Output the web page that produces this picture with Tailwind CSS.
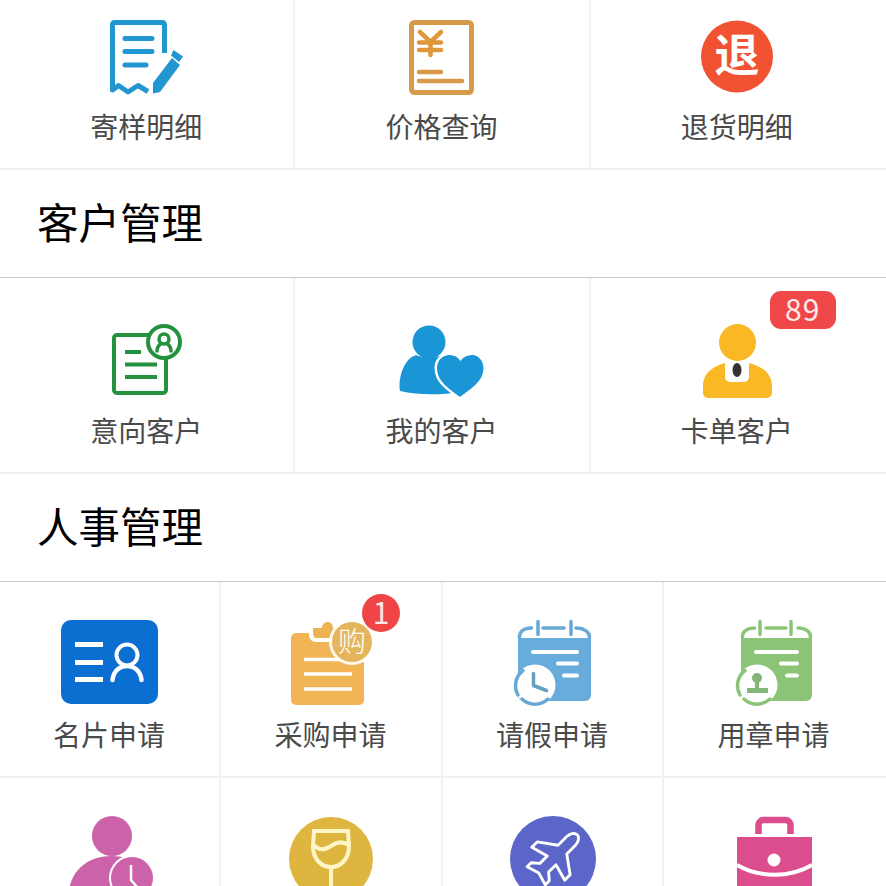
<!DOCTYPE html>
<html lang="zh-CN">
  <head>
    <meta charset="UTF-8" />
    <meta name="viewport" content="width=device-width, initial-scale=1.0" />
    <script src="https://cdn.jsdelivr.net/npm/@tailwindcss/browser@4"></script>
  </head>
  <body class="bg-white">
    <div class="h-[886px] w-[886px] overflow-hidden font-['Noto_Sans_CJK_SC',sans-serif] text-[#4a4a4a]">
      <div class="-mt-[26px]">
        <!-- orders -->
        <div class="grid grid-cols-3 border-b-2 border-[#f2f2f2]">
          <div class="flex h-[194px] flex-col items-center border-r-2 border-[#f2f2f2] pt-[46px]">
            <svg class="block h-[76px] w-[110px] overflow-visible" viewBox="92 20 110 76" fill="none">
              <path d="M164.500 53V24.500a2 2 0 0 0-2-2H114.500a2 2 0 0 0-2 2V90l6-4.500 9.500 6.500 10-6.500 10 6" stroke="#2196d0" stroke-width="5" stroke-linejoin="round" />
              <path d="M125 38.500h27M125 51.500h27M125 65h21" stroke="#2196d0" stroke-width="5" stroke-linecap="round" />
              <path d="M153 93.500V83l19-25 8 7-20 27z" fill="#2196d0" />
              <path d="M173.500 50l9.500 6.500-4 5.500-8-6.500z" fill="#2196d0" />
            </svg>
            <span class="mt-[10px] -ml-[1px] text-[28px] leading-[40px]">寄样明细</span>
          </div>
          <div class="flex h-[194px] flex-col items-center border-r-2 border-[#f2f2f2] pt-[46px]">
            <svg class="block h-[76px] w-[110px] overflow-visible" viewBox="387 20 110 76" fill="none">
              <rect x="411.500" y="22.500" width="60" height="70" rx="3" stroke="#d69a48" stroke-width="5" />
              <path d="M420 32l10.500 10L441 32M419 42.500h22M419 50h22M430.500 42v13" stroke="#e0963a" stroke-width="4.500" stroke-linecap="round" />
              <path d="M419 72h22M419 81h43" stroke="#d69a48" stroke-width="4.500" stroke-linecap="round" />
            </svg>
            <span class="mt-[10px] -ml-[1px] text-[28px] leading-[40px]">价格查询</span>
          </div>
          <div class="flex h-[194px] flex-col items-center border-r-2 border-transparent pt-[46px]">
            <svg class="block h-[76px] w-[110px] overflow-visible" viewBox="682 20 110 76">
              <circle cx="737" cy="56.500" r="36" fill="#f15232" />
              <text x="737" y="72" text-anchor="middle" font-size="45" font-weight="700" fill="#ffffff">退</text>
            </svg>
            <span class="mt-[10px] -ml-[1px] text-[28px] leading-[40px]">退货明细</span>
          </div>
        </div>

        <div class="flex h-[108px] items-center border-b border-[#cccccc] pb-[3px] pl-[37px] text-[41.500px] leading-none text-black">客户管理</div>

        <div class="grid grid-cols-3 border-b-2 border-[#f2f2f2]">
          <div class="flex h-[194px] flex-col items-center border-r-2 border-[#f2f2f2] pt-[46px]">
            <svg class="block h-[76px] w-[110px] overflow-visible" viewBox="92 324 110 76" fill="none">
              <rect x="114" y="335" width="52" height="58" rx="3" stroke="#23913d" stroke-width="4" />
              <path d="M125 352h16M125 364.500h32M125 377h32" stroke="#23913d" stroke-width="4" />
              <circle cx="164" cy="342" r="16" fill="#ffffff" stroke="#23913d" stroke-width="4" />
              <circle cx="164" cy="339" r="5" stroke="#23913d" stroke-width="3.500" />
              <path d="M157 351c0-4 2-6 4-7.500M171 351c0-4-2-6-4-7.500" stroke="#23913d" stroke-width="3.500" stroke-linecap="round" />
            </svg>
            <span class="mt-[10px] -ml-[1px] text-[28px] leading-[40px]">意向客户</span>
          </div>
          <div class="flex h-[194px] flex-col items-center border-r-2 border-[#f2f2f2] pt-[46px]">
            <svg class="block h-[76px] w-[110px] overflow-visible" viewBox="387 324 110 76">
              <circle cx="429" cy="342" r="16.500" fill="#1a96d6" />
              <path d="M416 355c5 3 21 3 26 0 10 3 12 15 12 38-16 2-38 2-54-2-2-14 4-32 16-36z" fill="#1a96d6" />
              <path d="M460 397c-12-9-23-16-23-29 0-8 6-13 12.500-13 4.500 0 8.500 2 11 6 2.500-4 6.500-6 11.500-6 6.500 0 11.500 6 11.500 13 0 13-11.500 20-23.500 29z" fill="#1a96d6" stroke="#ffffff" stroke-width="5" paint-order="stroke" />
            </svg>
            <span class="mt-[10px] -ml-[1px] text-[28px] leading-[40px]">我的客户</span>
          </div>
          <div class="relative flex h-[194px] flex-col items-center border-r-2 border-transparent pt-[46px]">
            <svg class="block h-[76px] w-[110px] overflow-visible" viewBox="682 324 110 76">
              <circle cx="737.500" cy="342.500" r="18.500" fill="#fbb825" />
              <path d="M725 363v14a5 5 0 0 0 5 5h14a5 5 0 0 0 5-5v-14c14 4 23 10 23 24v6a5 5 0 0 1-5 5h-59a5 5 0 0 1-5-5v-6c0-14 9-20 22-24z" fill="#fbb825" />
              <ellipse cx="737" cy="370" rx="4.500" ry="7" fill="#333333" />
            </svg>
            <span class="mt-[10px] -ml-[1px] text-[28px] leading-[40px]">卡单客户</span>
            <span class="absolute left-[179px] top-[13px] flex h-[38px] w-[66px] items-center justify-center rounded-[11px] bg-[#f04848] pb-[5px] text-[30px] leading-none tracking-[1px] text-[#ffe9e9]">89</span>
          </div>
        </div>

        <div class="flex h-[108px] items-center border-b border-[#cccccc] pb-[3px] pl-[37px] text-[41.500px] leading-none text-black">人事管理</div>

        <div class="grid grid-cols-[221px_222px_221px_222px] border-b-2 border-[#f2f2f2]">
          <div class="flex h-[194px] flex-col items-center border-r-2 border-[#f2f2f2] pt-[38px]">
            <svg class="block h-[84px] w-[110px] overflow-visible" viewBox="55 620 110 84" fill="none">
              <rect x="61" y="620" width="97" height="84" rx="10" fill="#0b6fd2" />
              <path d="M75 644.500h28M75 662.500h28M75 679.500h28" stroke="#ffffff" stroke-width="5" />
              <circle cx="127" cy="655" r="10.500" stroke="#ffffff" stroke-width="4" />
              <path d="M112.500 680c1-9 7-14 14.500-14s13.500 5 14.500 14" stroke="#ffffff" stroke-width="4.500" stroke-linecap="round" />
            </svg>
            <span class="mt-[10px] -ml-[1px] text-[28px] leading-[40px]">名片申请</span>
          </div>
          <div class="relative flex h-[194px] flex-col items-center border-r-2 border-[#f2f2f2] pt-[38px]">
            <svg class="block h-[84px] w-[110px] overflow-visible" viewBox="276 620 110 84" fill="none">
              <path d="M296 633h13c0 6 2 9 8 9h30v20h17v38a5 5 0 0 1-5 5h-63a5 5 0 0 1-5-5v-62a5 5 0 0 1 5-5z" fill="#f2b555" />
              <path d="M313 628h9c0-4 3-6 6-6s5 3 5 6h5v10h-21c-3 0-4-2-4-6z" fill="#ecb254" />
              <path d="M304 659.500h48M304 674h48M304 689h48" stroke="#ffffff" stroke-width="3.500" />
              <circle cx="352" cy="642" r="23" fill="#ffffff" fill-opacity="0.9" />
              <circle cx="352" cy="642" r="20" fill="#e5b55c" />
              <text x="352" y="652" text-anchor="middle" font-size="28" font-weight="300" fill="#ffffff">购</text>
            </svg>
            <span class="mt-[10px] -ml-[1px] text-[28px] leading-[40px]">采购申请</span>
            <span class="absolute left-[141px] top-[12px] flex size-[38px] items-center justify-center rounded-full bg-[#f04545] pb-[5px] text-[30px] leading-none text-[#ffe9e9]">1</span>
          </div>
          <div class="flex h-[194px] flex-col items-center border-r-2 border-[#f2f2f2] pt-[38px]">
            <svg class="block h-[84px] w-[110px] overflow-visible" viewBox="498 620 110 84" fill="none">
              <path d="M518 638h73v57a6 6 0 0 1-6 6h-61a6 6 0 0 1-6-6z" fill="#68acdc" />
              <path d="M519.500 637c0-5 4-9 12-9M543 628h21M576 628c8 0 13.500 4 13.500 9M538 621.500v13M571 621.500v13" stroke="#68a8d4" stroke-width="3.500" stroke-linecap="round" />
              <path d="M533 652h44M558 663.500h19M564 675.500h13" stroke="#ffffff" stroke-width="4" stroke-linecap="round" />
              <circle cx="535" cy="685" r="20.500" fill="#ffffff" />
              <path d="M523 670.500A19 19 0 0 0 518 695M522 699A19 19 0 0 0 548 699" stroke="#68a8d4" stroke-width="3.500" stroke-linecap="round" />
              <path d="M533.500 673.500v12l13 5" stroke="#68a0c4" stroke-width="3.500" stroke-linecap="round" stroke-linejoin="round" />
            </svg>
            <span class="mt-[10px] -ml-[1px] text-[28px] leading-[40px]">请假申请</span>
          </div>
          <div class="flex h-[194px] flex-col items-center border-r-2 border-transparent pt-[38px]">
            <svg class="block h-[84px] w-[110px] overflow-visible" viewBox="719 620 110 84" fill="none">
              <path d="M741 638h71v57a6 6 0 0 1-6 6h-59a6 6 0 0 1-6-6z" fill="#8cc477" />
              <path d="M742.500 637c0-5 4-9 12-9M766 628h20M798 628c8 0 12.500 4 12.500 9M760 621.500v13M791 621.500v13" stroke="#8cc477" stroke-width="3.500" stroke-linecap="round" />
              <path d="M756 652h41M781 663.500h16M787 675.500h10" stroke="#ffffff" stroke-width="4" stroke-linecap="round" />
              <circle cx="757" cy="685" r="20.500" fill="#ffffff" />
              <path d="M745 670.500A19 19 0 0 0 740 695M744 699A19 19 0 0 0 770 699" stroke="#8cc477" stroke-width="3.500" stroke-linecap="round" />
              <circle cx="757" cy="678" r="5" fill="#84b57a" />
              <path d="M755 680h4v8h-4z" fill="#84b57a" />
              <rect x="747" y="688" width="21" height="5" fill="#84b57a" />
            </svg>
            <span class="mt-[10px] -ml-[1px] text-[28px] leading-[40px]">用章申请</span>
          </div>
        </div>

        <div class="grid grid-cols-[221px_222px_221px_222px]">
          <div class="flex h-[194px] flex-col items-center border-r-2 border-[#f2f2f2] pt-[38px]">
            <svg class="block h-[84px] w-[110px] overflow-visible" viewBox="55 816 110 84">
              <circle cx="112" cy="836" r="20" fill="#cc62a9" />
              <path d="M68 900c0-26 16-44 44-44 26 0 42 20 42 44z" fill="#cc62a9" />
              <circle cx="132" cy="878" r="23" fill="#ffffff" />
              <circle cx="132" cy="878" r="21" fill="#cc62a9" />
              <path d="M131 865v15l6 7" fill="none" stroke="#ffffff" stroke-width="2.500" />
            </svg>
          </div>
          <div class="flex h-[194px] flex-col items-center border-r-2 border-[#f2f2f2] pt-[38px]">
            <svg class="block h-[84px] w-[110px] overflow-visible" viewBox="276 816 110 84" fill="none">
              <circle cx="331" cy="859" r="42" fill="#deb53e" />
              <path d="M314 831h34l1 15c0 14-9 21-18 21s-18-7-18-21zM331 867v33" stroke="#fff6c8" stroke-width="4" />
              <path d="M314 845c5 6 11 5 17 1s12-5 17-1" stroke="#fff6c8" stroke-width="4" />
            </svg>
          </div>
          <div class="flex h-[194px] flex-col items-center border-r-2 border-[#f2f2f2] pt-[38px]">
            <svg class="block h-[84px] w-[110px] overflow-visible" viewBox="498 816 110 84" fill="none">
              <circle cx="553" cy="859" r="43" fill="#5b66c8" />
              <path transform="translate(555 857) rotate(45) scale(0.95)" d="M0-33c4 0 6.500 5 6.500 9v13l18 13v8L6.500 5v11l7 6v6L0 24l-13.500 4v-6l7-6V5L-24.500 10V2l18-13v-13c0-4 2.500-9 6.500-9z" stroke="#ffffff" stroke-width="3" stroke-linejoin="round" />
            </svg>
          </div>
          <div class="flex h-[194px] flex-col items-center border-r-2 border-transparent pt-[38px]">
            <svg class="block h-[84px] w-[110px] overflow-visible" viewBox="719 816 110 84" fill="none">
              <path d="M758.500 834v-9a5 5 0 0 1 5-5h22a5 5 0 0 1 5 5v9" stroke="#dc4d8d" stroke-width="6.500" />
              <rect x="737" y="837" width="75" height="63" fill="#dc4d8d" />
              <path d="M737 865c22 13 53 13 75 0" stroke="#ffffff" stroke-width="4" />
              <circle cx="774" cy="860" r="6.500" fill="#ffffff" />
            </svg>
          </div>
        </div>
      </div>
    </div>
  </body>
</html>
